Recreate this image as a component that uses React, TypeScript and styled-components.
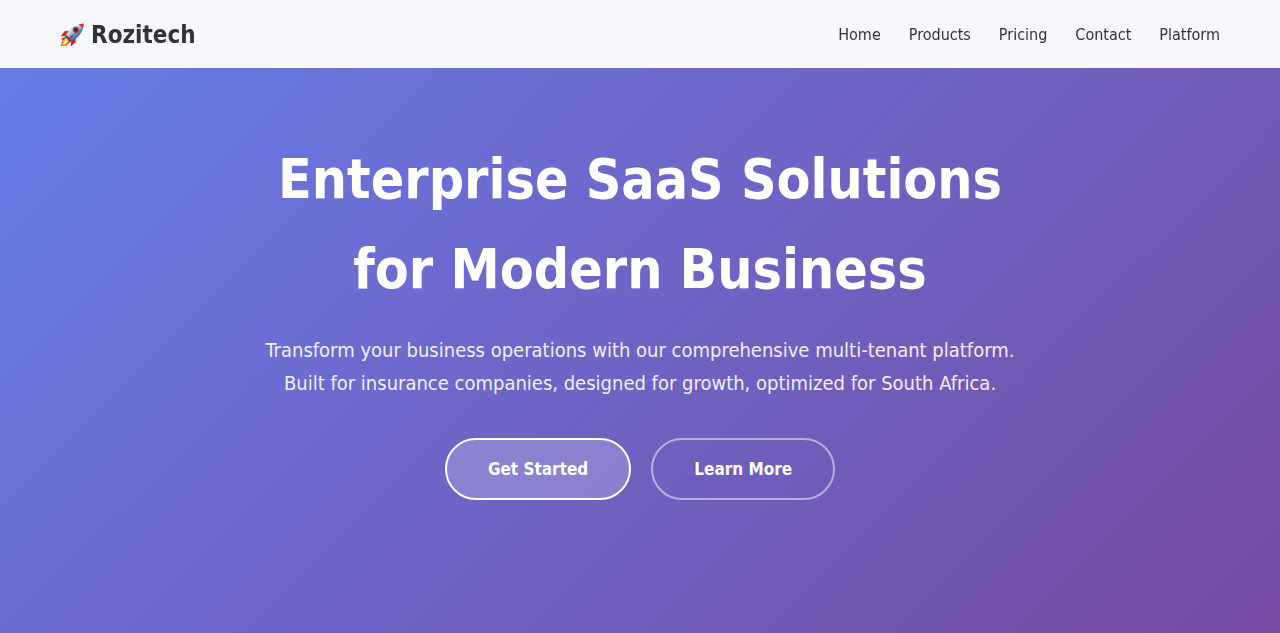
import React from "react";
import styled, { createGlobalStyle } from "styled-components";

const GlobalStyle = createGlobalStyle`
  *, *::before, *::after { box-sizing: border-box; }
  body {
    margin: 0;
    color: #333;
    font-family: Tahoma, "DejaVu Sans Condensed", "DejaVu Sans", Verdana, sans-serif;
    font-size: 16px;
    line-height: 26px;
  }
`;

const Header = styled.header`
  position: fixed;
  inset: 0 0 auto;
  z-index: 10;
  background: rgba(255, 255, 255, 0.95);
  backdrop-filter: blur(10px);
`;

const HeaderInner = styled.div`
  display: flex;
  align-items: center;
  justify-content: space-between;
  max-width: 1200px;
  min-height: 68px;
  margin: 0 auto;
  padding: 2px 20px 0;
`;

const Logo = styled.a`
  display: flex;
  align-items: center;
  gap: 7px;
  color: #333;
  font-size: 24px;
  font-weight: 700;
  text-decoration: none;
`;

const NavList = styled.ul`
  display: flex;
  gap: 28px;
  margin: 0;
  padding: 0;
  list-style: none;
`;

const NavLink = styled.a`
  color: #333;
  text-decoration: none;
`;

const Hero = styled.section`
  display: flex;
  align-items: center;
  justify-content: center;
  min-height: 100vh;
  padding: 88px 20px;
  background: linear-gradient(135deg, #667eea 0%, #764ba2 100%);
  color: #fff;
  text-align: center;
`;

const HeroContent = styled.div`
  max-width: 800px;
`;

const Title = styled.h1`
  margin: 0 0 20px;
  font-size: 55px;
  font-weight: 700;
  line-height: 90px;
`;

const Lead = styled.p`
  margin: 0 0 38px;
  font-size: 20px;
  line-height: 33px;
  opacity: 0.9;
`;

const Actions = styled.div`
  display: flex;
  flex-wrap: wrap;
  justify-content: center;
  gap: 20px;
`;

const Button = styled.button<{ $primary?: boolean }>`
  padding: 16px 41px;
  border: 2px solid ${(p) => (p.$primary ? "#fff" : "rgba(255, 255, 255, 0.5)")};
  border-radius: 50px;
  background: ${(p) => (p.$primary ? "rgba(255, 255, 255, 0.2)" : "transparent")};
  color: #fff;
  font: inherit;
  font-size: 17px;
  font-weight: 700;
  line-height: 26px;
  cursor: pointer;
`;

const RocketIcon = () => (
  <svg width="24" height="24" viewBox="0 0 24 24" aria-hidden="true">
    <defs>
      <linearGradient id="hull" x1="0.2" y1="0.1" x2="0.8" y2="0.9">
        <stop offset="0" stopColor="#f4f8fb" />
        <stop offset="0.4" stopColor="#b9cfdf" />
        <stop offset="0.6" stopColor="#4a8fcb" />
        <stop offset="1" stopColor="#28557f" />
      </linearGradient>
    </defs>
    <path d="M10 7.6 4.5 8.2.8 13.2 6 13Z" fill="#e2231a" />
    <path d="M16 13.5 15.6 19 10.8 23.4 11 17.5Z" fill="#d81e18" />
    <path d="M5.5 13.6 1 15.8 2.6 17 .8 23 6.4 22.6 10 19.6 9.8 16.6Z" fill="#f0401c" />
    <path d="M6 14.8 3.4 17.6 1.8 22.8 6.6 21.2 9.2 17.6Z" fill="#ffc928" />
    <path d="M6.3 16 4.2 18.5 3.5 21.2 6.4 19.7 8 17.6Z" fill="#fff3a0" />
    <path d="M5.2 13.6C8 6.6 14 1.2 23.6.4 23.8 8.4 18 15.8 10.2 18.8Z" fill="url(#hull)" />
    <path d="M18.4 1.6C20 .9 21.7.5 23.6.4 23.7 2.4 23.4 4.1 22.8 5.7 21.8 3.8 20.2 2.4 18.4 1.6Z" fill="#e12a20" />
    <path d="M5.2 13.6 6.2 12 11.7 17.8 10.2 18.8Z" fill="#354b61" />
    <path d="M7.2 17.1 12 11.8 13.1 12.8 8.5 18.3Z" fill="#e5281e" />
    <circle cx="15.8" cy="6.8" r="3.1" fill="#d9271f" />
    <circle cx="15.8" cy="6.8" r="1.9" fill="#26334a" />
  </svg>
);

const links = ["Home", "Products", "Pricing", "Contact", "Platform"];

export default function App() {
  return (
    <>
      <GlobalStyle />
      <Header>
        <HeaderInner>
          <Logo href="#home">
            <RocketIcon />
            Rozitech
          </Logo>
          <nav aria-label="Main">
            <NavList>
              {links.map((label) => (
                <li key={label}>
                  <NavLink href={`#${label.toLowerCase()}`}>{label}</NavLink>
                </li>
              ))}
            </NavList>
          </nav>
        </HeaderInner>
      </Header>
      <main>
        <Hero id="home">
          <HeroContent>
            <Title>
              Enterprise SaaS Solutions
              <br />
              for Modern Business
            </Title>
            <Lead>
              Transform your business operations with our comprehensive multi-tenant platform.
              <br />
              Built for insurance companies, designed for growth, optimized for South Africa.
            </Lead>
            <Actions>
              <Button type="button" $primary>Get Started</Button>
              <Button type="button">Learn More</Button>
            </Actions>
          </HeroContent>
        </Hero>
      </main>
    </>
  );
}
